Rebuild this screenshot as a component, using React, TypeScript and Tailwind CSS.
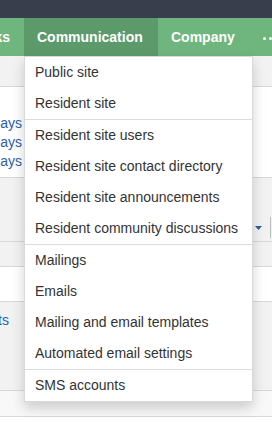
import React from "react";

const groups: string[][] = [
  ["Public site", "Resident site"],
  [
    "Resident site users",
    "Resident site contact directory",
    "Resident site announcements",
    "Resident community discussions",
  ],
  ["Mailings", "Emails", "Mailing and email templates", "Automated email settings"],
  ["SMS accounts"],
];

export default function App() {
  return (
    <div
      className="relative w-[272px] h-[433px] overflow-hidden bg-white"
      style={{ fontFamily: '"Liberation Sans", Arial, sans-serif' }}
    >
      <div className="h-[18px] bg-[#393e4c]" />
      <nav className="h-[38px] bg-[#6fb57e] flex items-stretch text-white font-bold text-[14px] whitespace-nowrap">
        <div className="w-[24px] shrink-0 overflow-hidden flex justify-end items-center pr-[14px]">
          <span>Links</span>
        </div>
        <div className="w-[134px] shrink-0 bg-[#5c9a6b] flex items-center pl-[13px]">Communication</div>
        <div className="shrink-0 flex items-center px-[13px]">Company</div>
        <div className="shrink-0 flex items-center gap-[3px] pl-[15px] pt-[3px]" aria-label="More">
          <span className="block w-[3px] h-[3px] rounded-full bg-white" />
          <span className="block w-[3px] h-[3px] rounded-full bg-white" />
          <span className="block w-[3px] h-[3px] rounded-full bg-white" />
        </div>
      </nav>

      <div className="text-[14px]">
        <div className="h-[31px] bg-[#f2f2f2] border-b border-[#d9d9d9]" />
        <div className="h-[91px] bg-white border-b border-[#d9d9d9] pt-[27px]">
          <div className="w-[22px] overflow-hidden flex flex-col items-end leading-[19px] text-[#2d5fa8] whitespace-nowrap">
            <span>30 days</span>
            <span>60 days</span>
            <span>90 days</span>
          </div>
        </div>
        <div className="h-[64px] bg-[#f2f2f2] border-b border-[#d9d9d9] pt-[39px]">
          <div className="h-[21px] flex justify-end items-center">
            <svg width="7" height="4" viewBox="0 0 7 4">
              <path d="M0 0H7L3.5 4Z" fill="#2a5ca8" />
            </svg>
            <div className="ml-[8px] w-[2px] h-full border-l border-[#bdbdbd]" />
          </div>
        </div>
        <div className="h-[25px] bg-[#f2f2f2] border-b border-[#d9d9d9]" />
        <div className="h-[35px] bg-white border-b border-[#d9d9d9]" />
        <div className="h-[89px] bg-[#f2f2f2] border-b border-[#d9d9d9] pt-[9px]">
          <div className="w-[9px] overflow-hidden flex justify-end leading-[19px] text-[#2d5fa8] whitespace-nowrap">
            <span>Reports</span>
          </div>
        </div>
        <div className="h-[26px] bg-[#f8f8f8] border-b border-[#d9d9d9]" />
      </div>

      <div className="absolute left-[24px] top-[56px] w-[229px] bg-white border border-[rgba(0,0,0,0.15)] shadow-[0_6px_12px_rgba(0,0,0,0.175)] text-[14px] text-[#333]">
        {groups.map((g, gi) => (
          <div key={gi} className={gi > 0 ? "border-t border-[#dcdcdc]" : ""}>
            {g.map((item) => (
              <div key={item} className="h-[31px] leading-[31px] pl-[10px] whitespace-nowrap">
                {item}
              </div>
            ))}
          </div>
        ))}
      </div>
    </div>
  );
}
